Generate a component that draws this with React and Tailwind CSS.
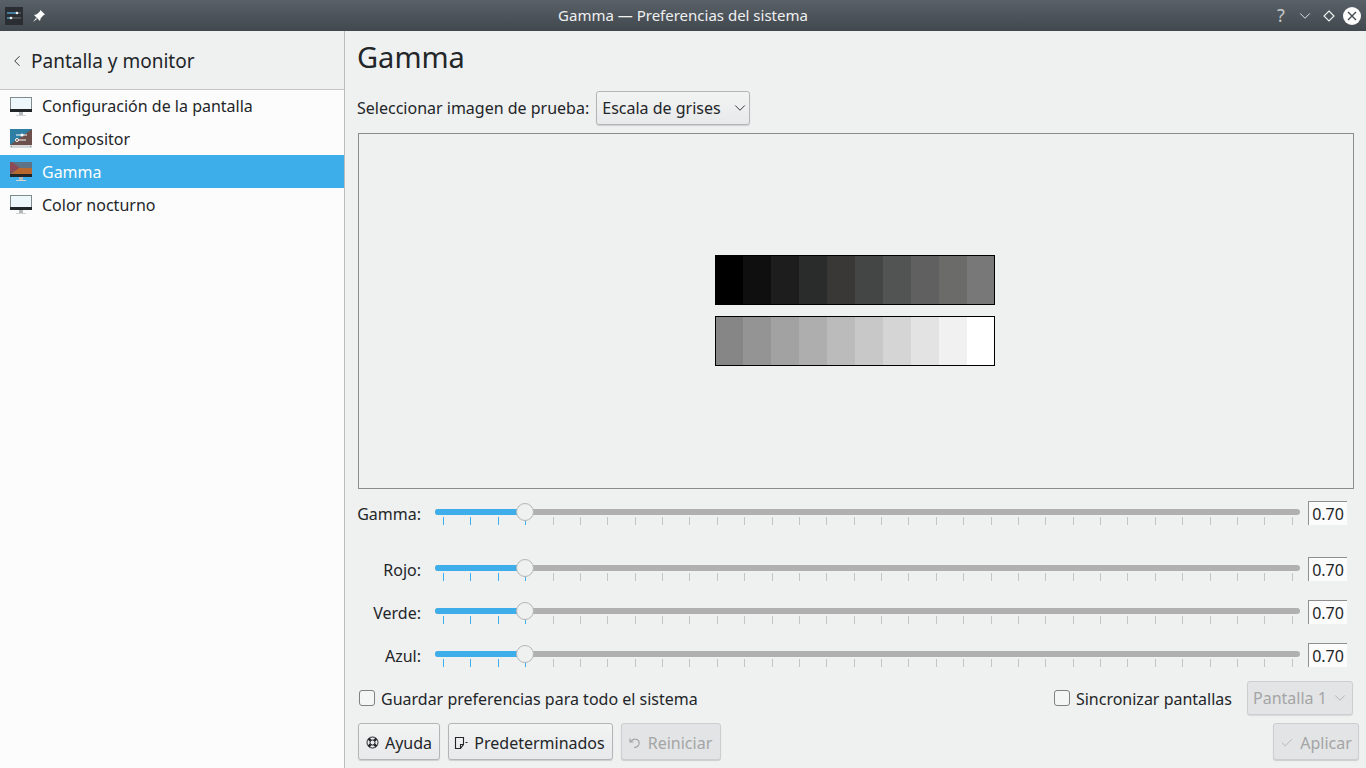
import { Check, ChevronDown, ChevronLeft } from 'lucide-react';

const darkSwatches = ['bg-[#000000]', 'bg-[#0f0f0f]', 'bg-[#1d1d1d]', 'bg-[#2a2c2b]', 'bg-[#3a3836]', 'bg-[#444645]', 'bg-[#525453]', 'bg-[#606060]', 'bg-[#6b6b69]', 'bg-[#787878]'];
const lightSwatches = ['bg-[#868686]', 'bg-[#949494]', 'bg-[#a2a2a2]', 'bg-[#aeaeae]', 'bg-[#bbbbbb]', 'bg-[#c8c8c8]', 'bg-[#d5d5d5]', 'bg-[#e3e3e3]', 'bg-[#f1f1f1]', 'bg-[#ffffff]'];

const ticks = Array.from({ length: 32 }, (_, i) => i);

function MonitorIcon({ variant }) {
  return (
    <svg width="22" height="19" viewBox="0 0 22 19" className="shrink-0">
      {variant === 'plain' && (
        <>
          <rect x="0.5" y="0.5" width="21" height="14" fill="#eef8fc" stroke="#7f8c8d" />
          <rect x="0" y="12" width="22" height="3" fill="#232629" />
        </>
      )}
      {variant === 'compositor' && (
        <>
          <rect x="0" y="0" width="22" height="16" fill="#2f7fa5" />
          <path d="M22 0V16H0Z" fill="#6d4f4c" />
          <path d="M6 6h11M6 11h10" stroke="#fcfcfc" strokeWidth="1" />
          <circle cx="12" cy="6" r="1.6" fill="#fcfcfc" />
          <circle cx="7" cy="11" r="1.5" fill="#6d4f4c" stroke="#fcfcfc" />
          <rect x="0" y="16" width="22" height="3" fill="#d5d8d9" />
          <path d="M1 17.500h1M20 17.500h1" stroke="#7f8c8d" />
        </>
      )}
      {variant === 'gamma' && (
        <>
          <rect x="0" y="0" width="22" height="14" fill="#5f7387" />
          <path d="M0 0h2l8 6L0 12Z" fill="#8b4a55" />
          <path d="M0 13l9-7h13v7Z" fill="#b8682f" />
          <rect x="0" y="12" width="22" height="3" fill="#232629" />
        </>
      )}
      {variant !== 'compositor' && (
        <>
          <rect x="9" y="15" width="4" height="3" fill="#b4b8ba" />
          <rect x="6" y="18" width="10" height="1" fill="#d0d3d4" />
        </>
      )}
    </svg>
  );
}

function SidebarRow({ label, variant, active, className = '' }) {
  return (
    <div className={`h-[33px] flex items-center pl-[10px] gap-[10px] ${active ? 'bg-[#3daee9] text-[#fcfcfc]' : ''} ${className}`}>
      <MonitorIcon variant={variant} />
      <span>{label}</span>
    </div>
  );
}

function Slider({ label, className }) {
  return (
    <div className={`h-[24px] flex items-start ${className}`}>
      <label className="w-[64px] text-right leading-[26px] shrink-0">{label}</label>
      <div className="relative ml-[14px] w-[865px] h-[24px]">
        <div className="absolute left-0 right-0 top-[8px] h-[6px] rounded-full bg-[#b0b0b0]" />
        <div className="absolute left-0 w-[82px] top-[8px] h-[6px] rounded-l-full bg-[#3daee9]" />
        <div className="absolute left-[8px] w-[850px] top-[16px] flex justify-between">
          {ticks.map((t) => (
            <div key={t} className={`w-px h-[8px] ${t < 4 ? 'bg-[#3daee9]' : 'bg-[#c4c5c6]'}`} />
          ))}
        </div>
        <div className="absolute left-[81px] top-[2px] w-[18px] h-[18px] rounded-full bg-[#eff0f0] border border-[#b4b5b6]" />
      </div>
      <div className="ml-[8px] w-[39px] h-[24px] bg-[#fcfcfc] border-l border-t border-[#8d8f90] text-center leading-[24px]">0.70</div>
    </div>
  );
}

function Button({ children, disabled, className }) {
  return (
    <button
      type="button"
      className={`h-[37px] flex items-center justify-center gap-[6px] rounded-[3px] border shadow-[0_1px_1px_rgba(0,0,0,0.15)] ${disabled ? 'border-[#cdcecf] bg-[#e3e4e5] text-[#a3a5a6]' : 'border-[#b3b5b6] bg-gradient-to-b from-[#f2f3f3] to-[#e8e9ea]'} ${className}`}
    >
      {children}
    </button>
  );
}

function App() {
  return (
    <div className="w-[1366px] h-[768px] overflow-hidden flex flex-col bg-[#eff0f0] text-[#232629] text-[16px] font-['Noto_Sans',sans-serif]">
      <div className="h-[31px] shrink-0 flex items-center bg-gradient-to-b from-[#596168] to-[#41484e] text-[#eff0f0] text-[15px] relative">
        <svg width="18" height="18" viewBox="0 0 18 18" className="ml-[5px] relative">
          <rect x="0" y="0" width="18" height="18" fill="#2a2e32" />
          <path d="M2 6h14M2 11h14" stroke="#6a7074" strokeWidth="1" />
          <path d="M2 6h10M2 11h5" stroke="#3daee9" strokeWidth="1.2" />
          <circle cx="12" cy="6" r="1.3" fill="#eff0f0" />
          <circle cx="6" cy="11" r="1.3" fill="#eff0f0" />
        </svg>
        <svg width="14" height="14" viewBox="0 0 14 14" className="ml-[9px] relative">
          <path d="M8.500 1l4.500 4.500-1.500.7-2.800 3L8 12 2 6l2.800-.7 3-2.800ZM4 9l-3 4 4-3Z" fill="#fcfcfc" />
        </svg>
        <div className="absolute inset-0 flex items-center justify-center">Gamma — Preferencias del sistema</div>
        <div className="ml-auto flex items-center relative">
          <span className="w-[14px] text-center text-[#c4c8ca] text-[18px] mr-[8px]">?</span>
          <ChevronDown size={18} strokeWidth={1.2} className="mr-[8px]" />
          <svg width="14" height="14" viewBox="0 0 14 14" className="mr-[7px]">
            <path d="M7 2l5 5-5 5-5-5Z" fill="none" stroke="#eff0f0" strokeWidth="1.2" />
          </svg>
          <svg width="18" height="18" viewBox="0 0 18 18" className="mr-[5px]">
            <circle cx="9" cy="9" r="9" fill="#fcfcfc" />
            <path d="M5 5l8 8M13 5l-8 8" stroke="#41484e" strokeWidth="1.3" />
          </svg>
        </div>
      </div>

      <div className="flex-1 flex min-h-0">
        <div className="w-[345px] shrink-0 border-r border-[#b9bbbc] flex flex-col">
          <div className="h-[58px] shrink-0 flex items-center pl-[8px] gap-[5px] pt-[2px] text-[19px]">
            <ChevronLeft size={18} strokeWidth={1.2} />
            <span>Pantalla y monitor</span>
          </div>
          <div className="flex-1 bg-[#fcfcfc]">
            <SidebarRow label="Configuración de la pantalla" variant="plain" className="border-t border-[#c3c5c6]" />
            <SidebarRow label="Compositor" variant="compositor" />
            <SidebarRow label="Gamma" variant="gamma" active />
            <SidebarRow label="Color nocturno" variant="plain" />
          </div>
        </div>

        <div className="flex-1 min-w-0 pl-[13px] pr-[7px] flex flex-col">
          <h1 className="h-[60px] shrink-0 flex items-center text-[29px] -ml-px pb-[8px]">Gamma</h1>
          <div className="h-[34px] shrink-0 flex items-center -ml-px">
            <span>Seleccionar imagen de prueba:</span>
            <div className="ml-[7px] w-[154px] h-[34px] flex items-center justify-between pl-[5px] rounded-[3px] border border-[#b3b5b6] bg-gradient-to-b from-[#f2f3f3] to-[#e8e9ea] shadow-[0_1px_1px_rgba(0,0,0,0.15)]">
              <span>Escala de grises</span>
              <ChevronDown size={18} strokeWidth={1.2} />
            </div>
          </div>

          <div className="mt-[8px] mr-[5px] h-[356px] shrink-0 border border-[#8a8c8e] flex flex-col items-center justify-center gap-[11px] pb-[1px] pr-[2px]">
            <div className="w-[280px] h-[50px] outline outline-1 -outline-offset-1 outline-black flex">
              {darkSwatches.map((c) => (
                <div key={c} className={`flex-1 ${c}`} />
              ))}
            </div>
            <div className="w-[280px] h-[50px] outline outline-1 -outline-offset-1 outline-black flex">
              {lightSwatches.map((c) => (
                <div key={c} className={`flex-1 ${c}`} />
              ))}
            </div>
          </div>

          <Slider label="Gamma:" className="mt-[12px] -ml-[1px]" />
          <Slider label="Rojo:" className="mt-[32px] -ml-[1px]" />
          <Slider label="Verde:" className="mt-[19px] -ml-[1px]" />
          <Slider label="Azul:" className="mt-[19px] -ml-[1px]" />

          <div className="mt-[14px] h-[34px] shrink-0 flex items-center mr-[6px]">
            <div className="w-[16px] h-[16px] rounded-[3px] border border-[#7f8183] bg-[#f4f5f5] ml-px" />
            <span className="ml-[6px] pt-[2px]">Guardar preferencias para todo el sistema</span>
            <div className="ml-auto w-[16px] h-[16px] rounded-[3px] border border-[#7f8183] bg-[#f4f5f5]" />
            <span className="ml-[6px] pt-[2px]">Sincronizar pantallas</span>
            <div className="ml-[15px] w-[106px] h-[34px] flex items-center justify-between pl-[5px] pr-[3px] rounded-[3px] border border-[#cdcecf] bg-[#e3e4e5] text-[#a3a5a6] shadow-[0_1px_1px_rgba(0,0,0,0.1)]">
              <span>Pantalla 1</span>
              <ChevronDown size={18} strokeWidth={1} />
            </div>
          </div>

          <div className="mt-[8px] flex">
            <Button className="w-[82px] pt-[2px]">
              <svg width="13" height="13" viewBox="0 0 13 13" fill="none" stroke="#232629" strokeWidth="1">
                <circle cx="6.500" cy="6.500" r="5.500" />
                <circle cx="6.500" cy="6.500" r="2.500" />
                <path d="M2.500 2.500l2.200 2.200M10.500 2.500L8.300 4.700M2.500 10.500l2.200-2.200M10.500 10.500L8.300 8.300" strokeWidth="2.600" />
              </svg>
              <span>Ayuda</span>
            </Button>
            <Button className="w-[165px] ml-[8px] pt-[2px] pr-[2px]">
              <svg width="14" height="14" viewBox="0 0 14 14" fill="none" stroke="#232629" strokeWidth="1.1">
                <path d="M1.500 1.500h8v7L6.500 12.500h-5ZM6.500 12.500v-4h3M11.500 6.500h2" />
              </svg>
              <span>Predeterminados</span>
            </Button>
            <Button disabled className="w-[100px] ml-[8px] pt-[2px] pr-[2px]">
              <svg width="14" height="14" viewBox="0 0 14 14" fill="none" stroke="#a3a5a6" strokeWidth="1.2">
                <path d="M2 2.500v3.500h3.500M2.500 6C4 3.500 6.500 2.500 9 3.500c2.500 1.200 3 4.500 1 6.500-1 1-2 1.500-4 1.500" />
              </svg>
              <span>Reiniciar</span>
            </Button>
            <Button disabled className="w-[86px] ml-auto pt-[2px]">
              <Check size={14} strokeWidth={1.2} />
              <span>Aplicar</span>
            </Button>
          </div>
        </div>
      </div>
    </div>
  );
}

export default App;
